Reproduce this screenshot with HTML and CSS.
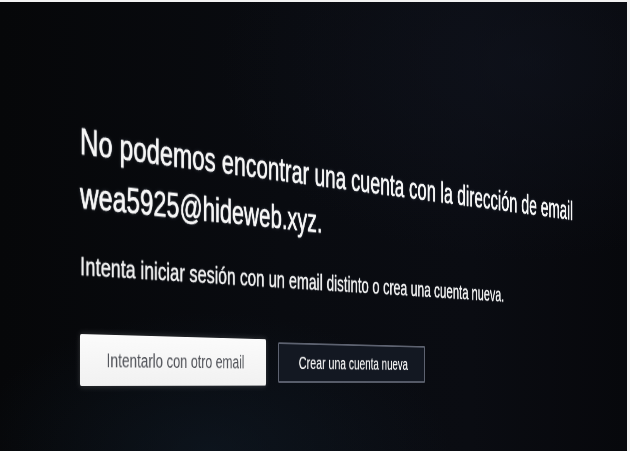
FILE: index.html
```html
<!DOCTYPE html>
<html lang="es">
<head>
<meta charset="utf-8">
<title>No podemos encontrar una cuenta</title>
<link rel="stylesheet" href="styles.css">
</head>
<body>
  <main class="screen">
    <section class="content">
      <h1 class="title">No podemos encontrar una cuenta con la dirección de email<br>wea5925@hideweb.xyz.</h1>
      <p class="lead">Intenta iniciar sesión con un email distinto o crea una cuenta nueva.</p>
      <div class="actions">
        <button class="btn btn-primary" type="button">Intentarlo con otro email</button>
        <button class="btn btn-secondary" type="button">Crear una cuenta nueva</button>
      </div>
    </section>
  </main>
</body>
</html>
```

FILE: styles.css
```css
html, body {
  margin: 0;
  padding: 0;
  height: 100%;
  overflow: hidden;
  background: #f2f2f2;
}

.screen {
  box-sizing: border-box;
  margin: 2px 3px 0 0;
  height: 449px;
  overflow: hidden;
  padding: 113px 0 0 80px;
  background:
    radial-gradient(ellipse 240px 140px at 210px 450px, rgba(18, 32, 46, 0.45), rgba(18, 32, 46, 0) 100%),
    radial-gradient(ellipse 300px 200px at 520px 60px, rgba(18, 22, 34, 0.5), rgba(18, 22, 34, 0) 100%),
    linear-gradient(90deg, #060709 0%, #090b10 45%, #0a0c12 75%, #07080c 100%);
  font-family: "Liberation Sans", Arial, sans-serif;
  color: #f6f6f6;
}

.content {
  width: 1000px;
  transform-origin: 0 267px;
  transform: perspective(1624px) rotateY(43.7deg);
}

.title {
  margin: 0;
  font-size: 36px;
  font-weight: 400;
  line-height: 54px;
  white-space: nowrap;
  -webkit-text-stroke: 0.5px #f6f6f6;
  text-shadow: 0 0 1px rgba(255, 255, 255, 0.9), 0 0 4px rgba(200, 220, 255, 0.2);
}

.lead {
  margin: 28px 0 0;
  font-size: 26px;
  line-height: 30px;
  white-space: nowrap;
  color: #eeeeee;
  -webkit-text-stroke: 0.3px #eeeeee;
  text-shadow: 0 0 1px rgba(255, 255, 255, 0.7), 0 0 3px rgba(200, 220, 255, 0.15);
}

.actions {
  display: flex;
  align-items: center;
  gap: 21px;
  margin-top: 53px;
}

.btn {
  box-sizing: border-box;
  width: 289px;
  margin: 0;
  padding: 0;
  font-family: "Liberation Sans", Arial, sans-serif;
  font-size: 20px;
  border-radius: 2px;
  text-align: center;
}

.btn-primary {
  height: 52px;
  border: 0;
  background: linear-gradient(180deg, #fbfbfb 0%, #f1f1f1 100%);
  color: #4d4f55;
  box-shadow: 0 0 6px rgba(255, 255, 255, 0.2);
}

.btn-secondary {
  height: 46px;
  border: 2px solid #5d6270;
  background: #131822;
  color: #f4f4f4;
  text-shadow: 0 0 1px rgba(255, 255, 255, 0.6);
}
```
